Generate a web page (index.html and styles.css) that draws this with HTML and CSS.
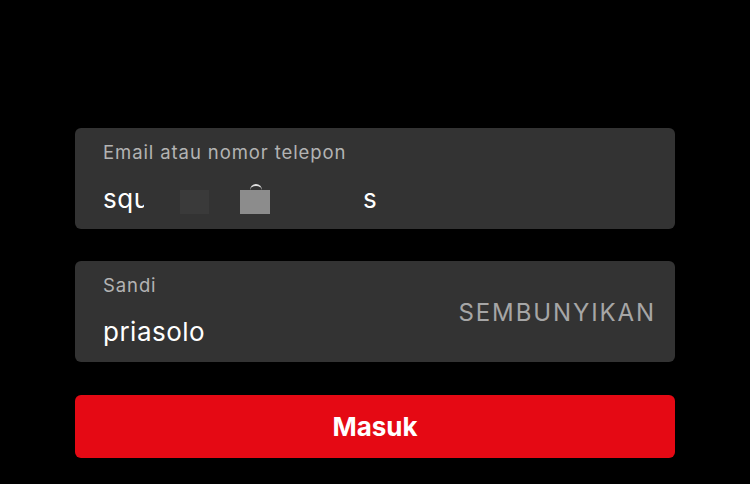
FILE: index.html
```html
<!DOCTYPE html>
<html lang="id">
<head>
<meta charset="utf-8">
<link rel="stylesheet" href="styles.css">
</head>
<body>
<main class="form">
  <div class="field">
    <div class="field-main">
      <div class="label">Email atau nomor telepon</div>
      <div class="value"><span class="clip">squ</span><span class="redact dark"></span><span class="redact gray"></span><span class="tail">s</span></div>
    </div>
  </div>
  <div class="field">
    <div class="field-main">
      <div class="label">Sandi</div>
      <div class="value">priasolo</div>
    </div>
    <div class="toggle">SEMBUNYIKAN</div>
  </div>
  <button class="submit">Masuk</button>
</main>
</body>
</html>
```
FILE: styles.css
```css
html, body {
  margin: 0;
  background: #000;
}
body {
  width: 750px;
  height: 484px;
  overflow: hidden;
  font-family: Inter, "Noto Sans", sans-serif;
}
.form {
  display: flex;
  flex-direction: column;
  gap: 32px;
  padding: 128px 75px 0;
}
.field {
  height: 101px;
  box-sizing: border-box;
  background: #333;
  border-radius: 6px;
  display: flex;
  align-items: flex-start;
  padding: 13px 21px 0 28px;
}
.field-main {
  flex: 1;
  display: flex;
  flex-direction: column;
}
.label {
  color: #b3b3b3;
  font-size: 18.5px;
  letter-spacing: 0.9px;
  line-height: 22px;
}
.value {
  color: #fff;
  font-size: 26px;
  letter-spacing: 0.5px;
  line-height: 30px;
  margin-top: 21px;
  display: flex;
  align-items: center;
  height: 30px;
}
.clip {
  display: inline-block;
  width: 41px;
  overflow: hidden;
  white-space: nowrap;
}
.redact {
  display: inline-block;
  height: 24px;
  margin-top: 6px;
  position: relative;
}
.redact.dark {
  width: 29px;
  background: #3a3a3a;
  margin-left: 36px;
}
.redact.gray {
  width: 30px;
  background: #8c8c8c;
  margin-left: 31px;
}
.redact.gray::before {
  content: "";
  position: absolute;
  left: 10px;
  top: -6px;
  width: 12px;
  height: 8px;
  border-top: 2px solid #e0e0e0;
  border-radius: 6px 6px 0 0;
  box-sizing: border-box;
}
.tail {
  margin-left: 93px;
}
.toggle {
  align-self: center;
  margin-top: -11px;
  color: #a6a6a6;
  font-size: 24px;
  letter-spacing: 1.9px;
  margin-right: -2px;
}
.submit {
  height: 63px;
  margin-top: 1px;
  border: none;
  border-radius: 6px;
  background: #e50914;
  color: #fff;
  font-family: Inter, "Noto Sans", sans-serif;
  font-size: 26px;
  font-weight: 700;
}
```
